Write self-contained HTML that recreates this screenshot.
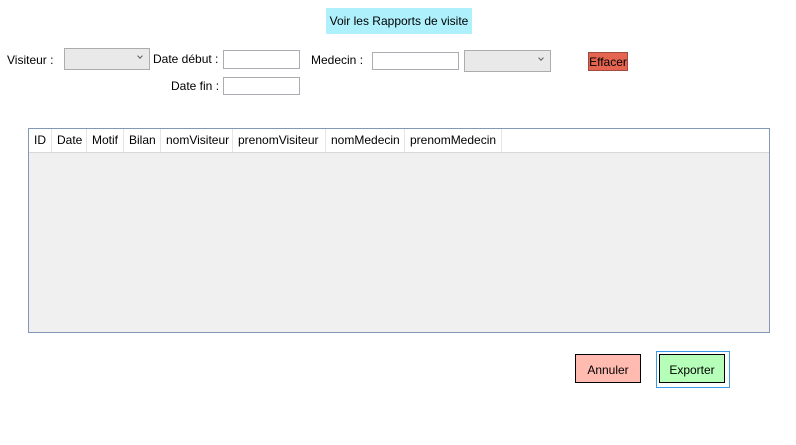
<!DOCTYPE html>
<html><head><style>
body{margin:0;width:796px;height:445px;background:#fff;position:relative;overflow:hidden;font-family:"Liberation Sans",sans-serif;font-size:12px;color:#000}
.a{position:absolute}
.tb{position:absolute;background:#fff;border:1px solid #abadb3;box-sizing:border-box}
.cb{position:absolute;background:#e9e9e9;border:1px solid #acacac;box-sizing:border-box}
.cb:after{content:"";position:absolute;right:7px;top:5px;width:3px;height:3px;border-right:1px solid #606060;border-bottom:1px solid #606060;transform:rotate(45deg)}
.h{position:absolute;top:0;height:23px;line-height:23px;border-right:1px solid #e5e5e5;box-sizing:border-box;padding-left:5px}
</style></head><body>
<div class="a" style="left:326px;top:8px;width:146px;height:26px;background:#aef0fb;line-height:27px;text-align:center">Voir les Rapports de visite</div>
<div class="a" style="left:7px;top:53px">Visiteur :</div>
<div class="cb" style="left:64px;top:48px;width:86px;height:22px"></div>
<div class="a" style="left:153px;top:52px">Date début :</div>
<div class="tb" style="left:223px;top:50px;width:77px;height:19px"></div>
<div class="a" style="left:171px;top:79px">Date fin :</div>
<div class="tb" style="left:223px;top:77px;width:77px;height:18px"></div>
<div class="a" style="left:311px;top:53px">Medecin :</div>
<div class="tb" style="left:372px;top:52px;width:87px;height:18px"></div>
<div class="cb" style="left:464px;top:50px;width:87px;height:22px"></div>
<div class="a" style="left:588px;top:52px;width:40px;height:19px;background:#e56450;border:1px solid #a04a40;box-sizing:border-box;line-height:19px;text-align:center">Effacer</div>
<div class="a" style="left:28px;top:128px;width:742px;height:205px;border:1px solid #8298b4;box-sizing:border-box;background:#f0f0f0">
<div class="a" style="left:0;top:0;width:740px;height:24px;background:#fff;border-bottom:1px solid #d8d8d8;box-sizing:border-box">
<div class="h" style="left:0;width:23px">ID</div>
<div class="h" style="left:23px;width:35px">Date</div>
<div class="h" style="left:58px;width:37px">Motif</div>
<div class="h" style="left:95px;width:37px">Bilan</div>
<div class="h" style="left:132px;width:72px">nomVisiteur</div>
<div class="h" style="left:204px;width:93px">prenomVisiteur</div>
<div class="h" style="left:297px;width:79px">nomMedecin</div>
<div class="h" style="left:376px;width:97px">prenomMedecin</div>
</div></div>
<div class="a" style="left:575px;top:354px;width:66px;height:29px;background:#ffbbb0;border:1px solid #000;box-sizing:border-box;line-height:30px;text-align:center">Annuler</div>
<div class="a" style="left:656px;top:351px;width:74px;height:37px;border:1px solid #3a9ae8;box-sizing:border-box"></div>
<div class="a" style="left:659px;top:354px;width:66px;height:29px;background:#b5ffb8;border:1px solid #000;box-sizing:border-box;line-height:30px;text-align:center">Exporter</div>
</body></html>
